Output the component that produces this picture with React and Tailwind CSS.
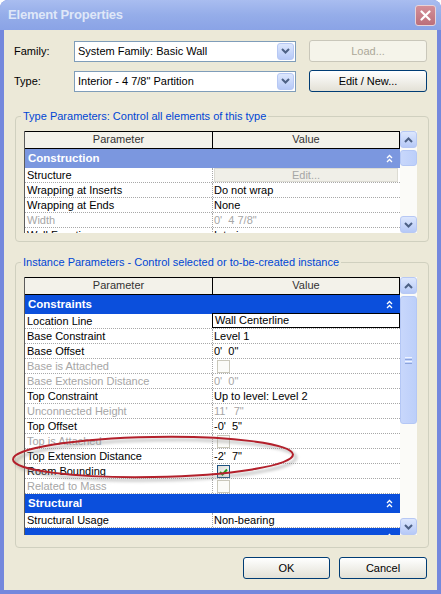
import React from 'react';

const typeRows = [
  { h: 'Construction', light: true },
  { p: 'Structure', button: 'Edit...' },
  { p: 'Wrapping at Inserts', v: 'Do not wrap' },
  { p: 'Wrapping at Ends', v: 'None' },
  { p: 'Width', v: "0'  4 7/8\"", dis: true },
  { p: 'Wall Function', v: 'Interior' },
];

const instRows = [
  { h: 'Constraints' },
  { p: 'Location Line', v: 'Wall Centerline', edit: true },
  { p: 'Base Constraint', v: 'Level 1' },
  { p: 'Base Offset', v: "0'  0\"" },
  { p: 'Base is Attached', cb: false, dis: true },
  { p: 'Base Extension Distance', v: "0'  0\"", dis: true },
  { p: 'Top Constraint', v: 'Up to level: Level 2' },
  { p: 'Unconnected Height', v: "11'  7\"", dis: true },
  { p: 'Top Offset', v: "-0'  5\"" },
  { p: 'Top is Attached', cb: false, dis: true },
  { p: 'Top Extension Distance', v: "-2'  7\"" },
  { p: 'Room Bounding', cb: true },
  { p: 'Related to Mass', cb: false, dis: true },
  { h: 'Structural' },
  { p: 'Structural Usage', v: 'Non-bearing' },
  { h: '' },
];

function Chevron({ up }) {
  return (
    <svg width="9" height="6" viewBox="0 0 9 6">
      <polyline
        points={up ? '1,5 4.5,1.5 8,5' : '1,1 4.5,4.5 8,1'}
        fill="none"
        stroke="#4d6185"
        strokeWidth="2"
      />
    </svg>
  );
}

function DoubleUp() {
  return (
    <svg width="7" height="9" viewBox="0 0 7 9">
      <polyline points="1,4 3.5,1.5 6,4" fill="none" stroke="#fff" strokeWidth="1.3" />
      <polyline points="1,8 3.5,5.5 6,8" fill="none" stroke="#fff" strokeWidth="1.3" />
    </svg>
  );
}

function ArrowBtn({ up }) {
  return (
    <div className="w-[17px] h-[17px] rounded-[3px] border border-[#b7c8f4] bg-linear-to-b from-[#dde7fd] to-[#b6c9f7] flex items-center justify-center">
      <Chevron up={up} />
    </div>
  );
}

function Combo({ text }) {
  return (
    <div className="w-[222px] h-[21px] border border-[#7f9db9] bg-white flex items-center pl-[3px] pr-[1px]">
      <span className="flex-1">{text}</span>
      <ArrowBtn />
    </div>
  );
}

function XpButton({ children, disabled, w }) {
  return (
    <div
      className={
        'h-[22px] rounded-[3px] border flex items-center justify-center ' +
        (w || 'w-[118px]') +
        (disabled
          ? ' border-[#c9c7ba] bg-[#f5f4ea] text-[#aca899]'
          : ' border-[#003c74] bg-linear-to-b from-[#ffffff] to-[#e3e1d6] text-black')
      }
    >
      {children}
    </div>
  );
}

function Checkbox({ checked, dis }) {
  return (
    <div
      className={
        'w-[13px] h-[13px] border flex items-center justify-center ' +
        (dis ? 'border-[#cac8bb] bg-[#fbfbf8]' : 'border-[#1c5180] bg-linear-to-br from-[#dcdcd7] to-[#ffffff]')
      }
    >
      {checked && (
        <svg width="9" height="8" viewBox="0 0 9 8">
          <polyline points="1,4 3.5,6.5 8,1.5" fill="none" stroke="#21a121" strokeWidth="2" />
        </svg>
      )}
    </div>
  );
}

function Row({ r }) {
  if (r.h !== undefined) {
    return (
      <div
        className={
          'h-[19px] shrink-0 flex items-center justify-between pl-[3px] pr-[7px] text-white font-bold text-[11.5px] ' +
          (r.light ? 'bg-[#7b97df]' : 'bg-[#0b4fdc]')
        }
      >
        <span>{r.h}</span>
        <DoubleUp />
      </div>
    );
  }
  const txt = r.dis ? 'text-[#a6a6a6]' : 'text-black';
  return (
    <div className="h-[15px] shrink-0 flex border-b border-dotted border-[#a8a8a8]">
      <div className={'w-[188px] shrink-0 border-r border-dotted border-[#a8a8a8] pl-[2px] leading-[14px] ' + txt}>
        {r.p}
      </div>
      <div className="flex-1 relative">
        {r.button && (
          <div className="absolute left-[1px] right-[2px] top-0 bottom-0 bg-[#f0efe8] border border-[#dcdbd3] text-[#a6a6a6] text-center leading-[12px]">
            {r.button}
          </div>
        )}
        {r.edit && (
          <div className="absolute -left-[1px] right-0 -top-[1px] bottom-0 bg-white border border-black pl-[2px] leading-[13px]">
            {r.v}
          </div>
        )}
        {r.cb !== undefined && (
          <div className="pl-[4px] pt-[1px]">
            <Checkbox checked={r.cb} dis={r.dis} />
          </div>
        )}
        {r.v && !r.edit && (
          <div className={'pl-[1px] leading-[14px] whitespace-pre ' + txt}>{r.v}</div>
        )}
      </div>
    </div>
  );
}

function Scrollbar({ thumbTop, thumbH, grip }) {
  return (
    <div className="w-[17px] shrink-0 bg-[#fbfbf8] flex flex-col relative">
      <ArrowBtn up />
      <div className="flex-1">
        <div style={{ marginTop: thumbTop, height: thumbH }} className="rounded-[3px] border border-[#b4c7f5] bg-linear-to-r from-[#c8d7fb] to-[#bccffa] flex items-center justify-center">
          {grip && (
            <div className="flex flex-col gap-[1px]">
              <div className="w-[7px] h-[1px] bg-[#eef3fe]" />
              <div className="w-[7px] h-[1px] bg-[#8ca4dc]" />
              <div className="w-[7px] h-[1px] bg-[#eef3fe]" />
              <div className="w-[7px] h-[1px] bg-[#8ca4dc]" />
            </div>
          )}
        </div>
      </div>
      <ArrowBtn />
    </div>
  );
}

function Grid({ rows, height, thumbTop, thumbH, grip }) {
  return (
    <div className="flex" style={{ height }}>
      <div className="w-[376px] shrink-0 border-l border-[#5c5c5c] bg-white flex flex-col overflow-hidden">
        <div className="h-[18px] shrink-0 flex border-t border-b border-black bg-[#f3f2ea] text-[#333] leading-[15px]">
          <div className="w-[188px] shrink-0 border-r border-black text-center">Parameter</div>
          <div className="flex-1 text-center border-r border-black">Value</div>
        </div>
        {rows.map((r, i) => (
          <Row key={i} r={r} />
        ))}
      </div>
      <Scrollbar thumbTop={thumbTop} thumbH={thumbH} grip={grip} />
    </div>
  );
}

function Group({ title, children, pb }) {
  return (
    <fieldset className={'ml-[11px] w-[414px] border border-[#d0d0bf] rounded-[4px] ' + pb}>
      <legend className="ml-[5px] px-[2px] text-[#0046d5] leading-[13px]">{title}</legend>
      <div className="mt-[8px] pl-[8px]">{children}</div>
    </fieldset>
  );
}

export default function App() {
  return (
    <div className="relative w-[441px] h-[594px] bg-[#7488dd] rounded-t-[8px] flex flex-col font-['Liberation_Sans',Arial,sans-serif] text-[11px] text-black select-none">
      {/* title bar */}
      <div className="h-[30px] shrink-0 rounded-t-[8px] bg-linear-to-b from-[#a9bdf0] via-[#95ade9] to-[#8aa3e6] flex items-center justify-between pl-[8px] pr-[5px]">
        <span className="text-[13px] font-bold text-[#dfe7f8] tracking-[-0.2px]">Element Properties</span>
        <div className="w-[21px] h-[21px] rounded-[3px] border border-[#e7d3d8] bg-linear-to-b from-[#d48f98] to-[#bb6f7b] flex items-center justify-center">
          <svg width="11" height="11" viewBox="0 0 11 11">
            <path d="M1.5 1.5 L9.5 9.5 M9.5 1.5 L1.5 9.5" stroke="#fff" strokeWidth="2.2" strokeLinecap="round" />
          </svg>
        </div>
      </div>

      {/* body */}
      <div className="flex-1 mx-[4px] mb-[4px] bg-[#ece9d8] flex flex-col pt-[10px]">
        <div className="flex items-center pl-[10px] h-[22px]">
          <span className="w-[60px]">Family:</span>
          <Combo text="System Family: Basic Wall" />
          <div className="ml-[13px]">
            <XpButton disabled>Load...</XpButton>
          </div>
        </div>
        <div className="flex items-center pl-[10px] h-[22px] mt-[8px]">
          <span className="w-[60px]">Type:</span>
          <Combo text={'Interior - 4 7/8" Partition'} />
          <div className="ml-[13px]">
            <XpButton>Edit / New...</XpButton>
          </div>
        </div>

        <div className="mt-[18px]">
          <Group title="Type Parameters: Control all elements of this type" pb="pb-[8px]">
            <Grid rows={typeRows} height={102} thumbTop={2} thumbH={16} />
          </Group>
        </div>

        <div className="mt-[14px]">
          <Group title="Instance Parameters - Control selected or to-be-created instance" pb="pb-[12px]">
            <Grid rows={instRows} height={258} thumbTop={2} thumbH={128} grip />
          </Group>
        </div>

        <div className="flex justify-end gap-[9px] pr-[10px] mt-[9px]">
          <XpButton w="w-[87px]">OK</XpButton>
          <XpButton w="w-[88px]">Cancel</XpButton>
        </div>
      </div>

      {/* red annotation ellipse */}
      <svg className="absolute left-[8px] top-[428px] pointer-events-none" width="300" height="60" viewBox="0 0 300 60">
        <defs>
          <filter id="sh" x="-10%" y="-50%" width="120%" height="200%">
            <feGaussianBlur stdDeviation="1.6" />
          </filter>
        </defs>
        <ellipse cx="148" cy="32" rx="140" ry="20" fill="none" stroke="#8c8c8c" strokeOpacity="0.55" strokeWidth="2.5" filter="url(#sh)" transform="rotate(-1 148 32)" />
        <ellipse cx="145" cy="29" rx="140" ry="20" fill="none" stroke="#b3202b" strokeWidth="2" transform="rotate(-1 145 29)" />
      </svg>
    </div>
  );
}
